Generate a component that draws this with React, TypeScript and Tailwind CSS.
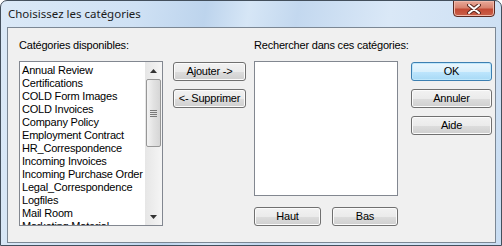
import React from "react"

const categories = [
    "Annual Review",
    "Certifications",
    "COLD Form Images",
    "COLD Invoices",
    "Company Policy",
    "Employment Contract",
    "HR_Correspondence",
    "Incoming Invoices",
    "Incoming Purchase Order",
    "Legal_Correspondence",
    "Logfiles",
    "Mail Room",
    "Marketing Material",
]

const VistaButton = ({ text, width, primary }: { text: string; width: string; primary?: boolean }) => (
    <button
        className={`${width} h-[19px] rounded-[3px] border text-[11px] leading-none text-black flex items-center justify-center ${
            primary
                ? "border-[#3c7fb1] bg-[linear-gradient(#eaf6fd_0%,#d9f0fc_50%,#bee6fd_51%,#a7d9f5_100%)] shadow-[inset_0_0_0_1px_#bfe7fb]"
                : "border-[#707070] bg-[linear-gradient(#f2f2f2_0%,#ebebeb_50%,#dddddd_51%,#cfcfcf_100%)] shadow-[inset_0_0_0_1px_#fbfbfb]"
        }`}
    >
        {text}
    </button>
)

const ScrollBar = () => (
    <div className="w-[17px] shrink-0 h-full flex flex-col bg-[linear-gradient(to_right,#e6e6e6,#f5f5f5)]">
        <div className="h-[17px] flex items-center justify-center">
            <svg width="7" height="4" viewBox="0 0 7 4">
                <path d="M3.5 0 L7 4 L0 4 Z" fill="#333" />
            </svg>
        </div>
        <div className="mx-[1px] h-[68px] rounded-[2px] border border-[#979797] bg-[linear-gradient(to_right,#f3f3f3,#e2e2e2_50%,#d6d6d6)] flex flex-col items-center justify-center gap-[1px]">
            <div className="w-[7px] h-[1px] bg-[#7a7a7a]" />
            <div className="w-[7px] h-[1px] bg-[#7a7a7a]" />
            <div className="w-[7px] h-[1px] bg-[#7a7a7a]" />
            <div className="w-[7px] h-[1px] bg-[#7a7a7a]" />
        </div>
        <div className="flex-1" />
        <div className="h-[17px] flex items-center justify-center">
            <svg width="7" height="4" viewBox="0 0 7 4">
                <path d="M0 0 L7 0 L3.5 4 Z" fill="#333" />
            </svg>
        </div>
    </div>
)

export default function App() {
    return (
        <div
            className="w-[502px] h-[246px] flex flex-col border border-[#434f5c] rounded-t-[7px] overflow-hidden bg-[linear-gradient(100deg,#dbe9f7_0%,#cfe1f4_25%,#bdd4ed_38%,#d6e6f6_46%,#c3d8ef_55%,#dae8f7_72%,#c9ddf2_100%)]"
            style={{ fontFamily: '"Liberation Sans", Arial, sans-serif' }}
        >
            {/* title bar */}
            <div className="h-[26px] flex items-start shrink-0">
                <div
                    className="pl-[7px] pt-[6px] text-[11.5px] leading-[14px] text-[#1b1b1b]"
                    style={{ fontFamily: '"Noto Sans", "Open Sans", sans-serif' }}
                >
                    Choisissez les catégories
                </div>
                <div className="ml-auto mr-[6px] w-[42px] h-[17px] -mt-[1px] rounded-b-[4px] border border-[#5a2a22] bg-[linear-gradient(#e9a999_0%,#d8836f_45%,#c44a34_55%,#c9614a_100%)] shadow-[inset_0_0_0_1px_#f0b9aa] flex items-center justify-center">
                    <svg width="14" height="10" viewBox="0 0 14 10">
                        <path d="M2 1 L12 9 M12 1 L2 9" stroke="#5b2a22" strokeWidth="4" strokeLinecap="round" />
                        <path d="M2 1 L12 9 M12 1 L2 9" stroke="#ffffff" strokeWidth="2" strokeLinecap="round" />
                    </svg>
                </div>
            </div>

            {/* client area */}
            <div className="ml-[6px] mr-[5px] mb-[2px] flex-1 border border-[#7b8794] bg-[#f0f0f0] flex items-start text-[11px] tracking-[-0.2px] text-black">
                <div className="ml-[11px] w-[144px] flex flex-col">
                    <div className="pt-[10px] h-[33px] leading-[14px]">Catégories disponibles:</div>
                    <div className="h-[165px] border border-[#828790] bg-white flex overflow-hidden">
                        <div className="flex-1 pl-[2px] pt-[2px] overflow-hidden">
                            {categories.map((c, i) => (
                                <div key={i} className="h-[13px] leading-[13px] whitespace-nowrap">
                                    {c}
                                </div>
                            ))}
                        </div>
                        <ScrollBar />
                    </div>
                </div>

                <div className="ml-[10px] pt-[34px] flex flex-col gap-[8px]">
                    <VistaButton text="Ajouter ->" width="w-[73px]" />
                    <VistaButton text="<- Supprimer" width="w-[73px]" />
                </div>

                <div className="ml-[8px] w-[144px] flex flex-col">
                    <div className="pt-[10px] h-[33px] leading-[14px] whitespace-nowrap">Rechercher dans ces catégories:</div>
                    <div className="h-[135px] border border-[#828790] bg-white" />
                    <div className="mt-[11px] flex justify-between">
                        <VistaButton text="Haut" width="w-[67px]" />
                        <VistaButton text="Bas" width="w-[66px]" />
                    </div>
                </div>

                <div className="ml-[13px] pt-[34px] flex flex-col gap-[8px]">
                    <VistaButton text="OK" width="w-[81px]" primary />
                    <VistaButton text="Annuler" width="w-[81px]" />
                    <VistaButton text="Aide" width="w-[81px]" />
                </div>
            </div>
        </div>
    )
}
